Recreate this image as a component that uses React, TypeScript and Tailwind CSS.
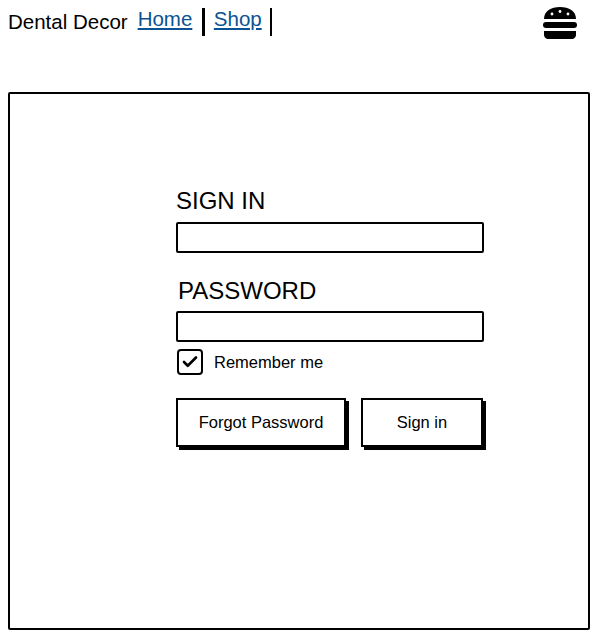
import { Check } from 'lucide-react'

const font = { fontFamily: '"Liberation Sans", Arial, sans-serif' }

function Burger() {
  return (
    <svg width="36" height="36" viewBox="0 0 36 36">
      <path d="M2 15 C2 7 9 3 18 3 C27 3 34 7 34 15 Z" fill="#000" />
      <circle cx="10" cy="10" r="1.4" fill="#fff" />
      <circle cx="18" cy="7.5" r="1.4" fill="#fff" />
      <circle cx="26" cy="10" r="1.4" fill="#fff" />
      <rect x="1" y="18" width="34" height="6" rx="3" fill="#000" />
      <path d="M2 27 H34 V31 C34 33 32 35 30 35 H6 C4 35 2 33 2 31 Z" fill="#000" />
    </svg>
  )
}

export default function App() {
  return (
    <div className="w-[606px] h-[642px] bg-white text-black" style={font}>
      {/* header */}
      <div className="flex items-start h-[92px] px-2">
        <span className="text-[20.5px] leading-[28px] mt-[8px]">Dental Decor</span>
        <a href="#" className="text-[20.5px] leading-[28px] mt-[5px] ml-[10px] text-[#0b5394] underline">Home</a>
        <span className="w-[2.5px] h-[28px] bg-black mt-[8px] ml-[10px]" />
        <a href="#" className="text-[20.5px] leading-[28px] mt-[5px] ml-[9px] text-[#0b5394] underline">Shop</a>
        <span className="w-[2.5px] h-[28px] bg-black mt-[8px] ml-[8px]" />
        <div className="ml-auto mt-[4px] mr-[20px]">
          <Burger />
        </div>
      </div>

      {/* panel */}
      <div className="ml-2 w-[582px] h-[538px] border-[2.5px] border-black rounded-[2px] pl-[166px] pt-[92px]">
        <div className="w-[308px] flex flex-col">
          <label className="text-[24px] leading-[30px]">SIGN IN</label>
          <div className="mt-[6px] h-[31px] border-[2.5px] border-black rounded-[2px]" />
          <label className="text-[24px] leading-[30px] mt-[23px] pl-[2px]">PASSWORD</label>
          <div className="mt-[5px] h-[31px] border-[2.5px] border-black rounded-[2px]" />
          <div className="flex items-center mt-[7px] ml-[1px]">
            <div className="w-[26px] h-[26px] border-[2.5px] border-black rounded-[4px] flex items-center justify-center">
              <Check size={18} strokeWidth={3.5} />
            </div>
            <span className="ml-[11px] text-[16.5px]">Remember me</span>
          </div>
          <div className="flex mt-[23px] gap-[15px]">
            <button className="w-[170px] h-[49px] border-[2.5px] border-black bg-white shadow-[3px_3px_0_#000] text-[16.5px]">
              Forgot Password
            </button>
            <button className="w-[122px] h-[49px] border-[2.5px] border-black bg-white shadow-[3px_3px_0_#000] text-[16.5px]">
              Sign in
            </button>
          </div>
        </div>
      </div>
    </div>
  )
}
